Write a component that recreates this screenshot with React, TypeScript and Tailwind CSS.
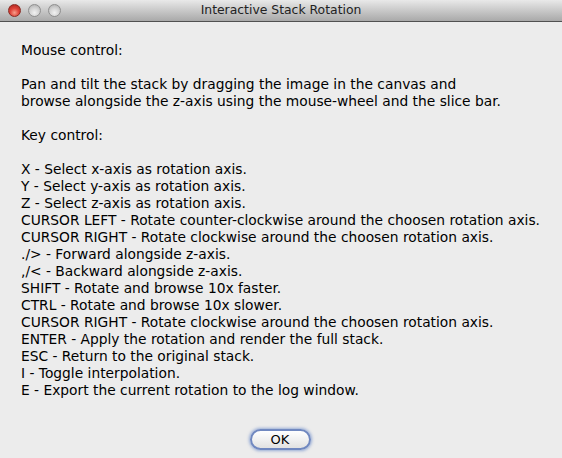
import React from 'react';

const keyLines = [
  'X - Select x-axis as rotation axis.',
  'Y - Select y-axis as rotation axis.',
  'Z - Select z-axis as rotation axis.',
  'CURSOR LEFT - Rotate counter-clockwise around the choosen rotation axis.',
  'CURSOR RIGHT - Rotate clockwise around the choosen rotation axis.',
  './> - Forward alongside z-axis.',
  ',/< - Backward alongside z-axis.',
  'SHIFT - Rotate and browse 10x faster.',
  'CTRL - Rotate and browse 10x slower.',
  'CURSOR RIGHT - Rotate clockwise around the choosen rotation axis.',
  'ENTER - Apply the rotation and render the full stack.',
  'ESC - Return to the original stack.',
  'I - Toggle interpolation.',
  'E - Export the current rotation to the log window.',
];

function Light({ color }: { color: 'red' | 'gray' }) {
  const cls =
    color === 'red'
      ? 'bg-[radial-gradient(circle_at_50%_70%,#f7a08c_0%,#e0443a_45%,#a3201a_100%)] border-[#8a2a22]'
      : 'bg-[radial-gradient(circle_at_50%_70%,#f2f2f2_0%,#d2d2d2_50%,#a9a9a9_100%)] border-[#8f8f8f]';
  return <div className={`w-[13px] h-[13px] rounded-full border ${cls}`} />;
}

export default function App() {
  return (
    <div
      className="w-[562px] h-[458px] flex flex-col bg-[#ececec] text-black overflow-hidden"
      style={{ fontFamily: '"DejaVu Sans", "Liberation Sans", sans-serif' }}
    >
      {/* Title bar */}
      <div className="relative h-[22px] shrink-0 flex items-center bg-gradient-to-b from-[#e9e9e9] to-[#a9a9a9] border-b border-[#515151]">
        <div className="flex items-center gap-[7px] pl-[8px]">
          <Light color="red" />
          <Light color="gray" />
          <Light color="gray" />
        </div>
        <div className="absolute inset-0 flex items-center justify-center text-[12.4px] text-[#222]">
          Interactive Stack Rotation
        </div>
      </div>

      {/* Body */}
      <div className="flex-1 flex flex-col pt-[20px] pl-[21px] text-[13.8px] leading-[17px]">
        <div>Mouse control:</div>
        <div className="h-[17px]" />
        <div>Pan and tilt the stack by dragging the image in the canvas and</div>
        <div>browse alongside the z-axis using the mouse-wheel and the slice bar.</div>
        <div className="h-[17px]" />
        <div>Key control:</div>
        <div className="h-[17px]" />
        {keyLines.map((line, i) => (
          <div key={i} className="whitespace-nowrap">{line}</div>
        ))}
      </div>

      <div className="flex justify-center pb-[8px] pr-[2px]">
        <button className="w-[61px] h-[21px] rounded-full border-2 border-[#7088c0] bg-gradient-to-b from-[#ffffff] via-[#f1f1f1] to-[#e2e2e2] shadow-[0_0_3px_1px_rgba(95,130,200,0.6)] text-[13px] leading-none text-black">
          OK
        </button>
      </div>
    </div>
  );
}
